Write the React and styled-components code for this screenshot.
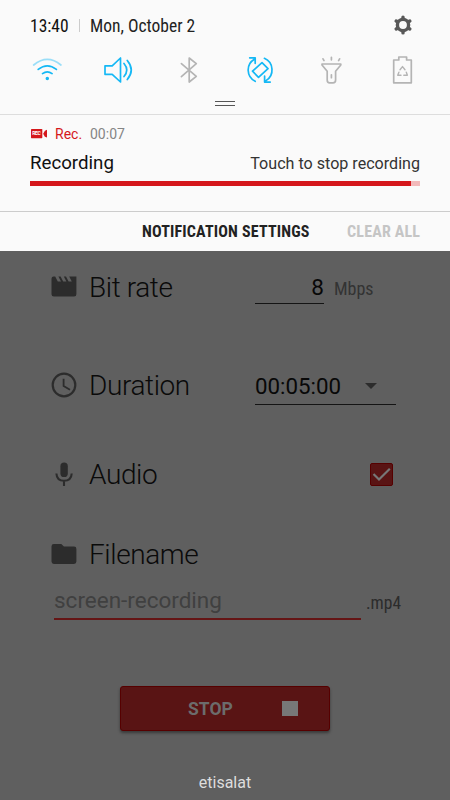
import React from 'react';
import styled, { createGlobalStyle } from 'styled-components';

const CYAN = '#15b8f5';
const GRAY = '#b4b4b4';
const RED = '#d5171b';

function App() {
  return (
    <Screen>
      <GlobalStyle />
      <Shade>
        <StatusHeader>
          <Clock>13:40</Clock>
          <HeaderRule />
          <DateText>Mon, October 2</DateText>
          <GearIcon />
        </StatusHeader>
        <QuickSettings>
          <WifiIcon />
          <SoundIcon />
          <BluetoothIcon />
          <RotateIcon />
          <TorchIcon />
          <BatteryIcon />
        </QuickSettings>
        <Handle />
        <Notification>
          <AppLine>
            <RecIcon />
            <AppName>Rec.</AppName>
            <Elapsed>00:07</Elapsed>
          </AppLine>
          <MessageLine>
            <Title>Recording</Title>
            <Hint>Touch to stop recording</Hint>
          </MessageLine>
          <Progress>
            <ProgressFill />
          </Progress>
        </Notification>
        <ShadeFooter>
          <FooterButton $width={168}>NOTIFICATION SETTINGS</FooterButton>
          <FooterButton $width={73} $disabled>
            CLEAR ALL
          </FooterButton>
        </ShadeFooter>
      </Shade>
      <Form>
        <Row $height={73}>
          <MovieIcon />
          <Label>Bit rate</Label>
          <BitRate>8</BitRate>
          <Unit>Mbps</Unit>
        </Row>
        <Row $height={124}>
          <ClockIcon />
          <Label $raised>Duration</Label>
          <Duration>
            00:05:00
            <Caret />
          </Duration>
        </Row>
        <Row $height={54}>
          <MicIcon />
          <Label $raised>Audio</Label>
          <Checkbox />
        </Row>
        <Row $height={106}>
          <FolderIcon />
          <Label $raised>Filename</Label>
        </Row>
        <FileRow>
          <FileInput>screen-recording</FileInput>
          <Extension>.mp4</Extension>
        </FileRow>
        <StopButton>
          <StopText>STOP</StopText>
          <StopSquare />
        </StopButton>
        <Carrier>etisalat</Carrier>
      </Form>
    </Screen>
  );
}

export default App;

function GearIcon() {
  return (
    <Gear viewBox="0 0 20 20">
      <g stroke="#585858" strokeLinecap="round">
        {[0, 60, 120].map((angle) => (
          <path
            key={angle}
            d="M10 2.1V17.9"
            strokeWidth="3.4"
            transform={`rotate(${angle} 10 10)`}
          />
        ))}
      </g>
      <circle cx="10" cy="10" r="5.6" fill="#fafafa" stroke="#585858" strokeWidth="3.4" />
    </Gear>
  );
}

function WifiIcon() {
  return (
    <QuickIcon viewBox="0 0 32 32" $color={CYAN}>
      <path d="M1.7 11Q15.3-.2 28.9 11" opacity=".42" />
      <path d="M6.2 15.4Q15.3 8.2 24.4 15.4" />
      <path d="M10.5 19.6Q15.3 16.2 20.1 19.6" />
      <circle cx="15.3" cy="24.4" r=".9" />
    </QuickIcon>
  );
}

function SoundIcon() {
  return (
    <QuickIcon viewBox="0 0 32 32" $color={CYAN}>
      <path d="M2 11.8H9.2L17.5 4V28L9.2 20.3H2Z" />
      <path d="M21 9.5Q26.5 16 21 22.5M24.3 6.5Q32.2 16 24.3 25.5" />
    </QuickIcon>
  );
}

function BluetoothIcon() {
  return (
    <QuickIcon viewBox="0 0 32 32" $color={GRAY}>
      <path d="M7.4 9.6L22.3 22.3L15.2 28V4L22.3 9.7L7.4 22.7" />
    </QuickIcon>
  );
}

function RotateIcon() {
  return (
    <QuickIcon viewBox="0 0 32 32" $color={CYAN}>
      <path d="M17 8.6L23 14.7L13.5 23.3L7.5 17.2Z" />
      <path d="M10.2 27.3A12.6 12.6 0 0 1 9.3 5.2M4.7 3.8H10.2V9.3" />
      <path d="M19.4 4.3A12.6 12.6 0 0 1 21 26.6M19.6 22.2V28.1H25.2" />
    </QuickIcon>
  );
}

function TorchIcon() {
  return (
    <QuickIcon viewBox="0 0 32 32" $color={GRAY}>
      <path d="M6 10H24.8V11L19.6 17.3V26Q19.6 28.9 17 28.9H13.6Q11.2 28.9 11.2 26V17.3L6 11Z" />
      <path d="M15.4 20.8V23.7M15.4 3.3V5.8M7 4.8L8 6.6M23.6 4.8L22.6 6.6" />
    </QuickIcon>
  );
}

function BatteryIcon() {
  return (
    <QuickIcon viewBox="0 0 32 32" $color={GRAY}>
      <path d="M6.7 6H11.8V3H19.6V6H24.3V28.8H6.7Z" />
      <path
        d="M13 15.8L15.5 12.6L18 15.8M19.3 18.2L20.4 21.2H16.8M14 21.2H10.7L11.9 18.2"
        strokeWidth="1.4"
      />
    </QuickIcon>
  );
}

function RecIcon() {
  return (
    <RecSvg viewBox="0 0 17 10">
      <rect width="11.3" height="9.2" rx=".6" fill={RED} />
      <path d="M12.2 4.7L13.9 1.7L16 .8V8.6L13.9 7.7Z" fill={RED} />
      <text x="1.2" y="6.4" fontSize="5" fontWeight="700" textLength="8.6" fill="#fff">
        REC
      </text>
    </RecSvg>
  );
}

function MovieIcon() {
  return (
    <RowIcon viewBox="0 0 26 26">
      <path d="M2.6 2.5H4.2L6.8 7.5H10L7.4 2.5H9.6L12.2 7.5H15.4L12.8 2.5H15L17.6 7.5H20.8L18.2 2.5H25.4V20.2Q25.4 22.6 23 22.6H2.9Q.5 22.6 .5 20.2V4.8Q.5 2.5 2.6 2.5Z" />
    </RowIcon>
  );
}

function ClockIcon() {
  return (
    <RowIcon viewBox="0 0 26 26">
      <circle cx="13" cy="13" r="11.3" fill="none" stroke="#2c2c2c" strokeWidth="2.2" />
      <path d="M12.6 6.7V14L19 17.7" fill="none" stroke="#2c2c2c" strokeWidth="1.8" />
    </RowIcon>
  );
}

function MicIcon() {
  return (
    <RowIcon viewBox="0 0 26 26">
      <rect x="9.4" y="1.5" width="7.4" height="14.6" rx="3.7" />
      <path
        d="M5.4 12.5Q5.8 19.8 13 19.8Q20.3 19.8 20.7 12.5M13 20V25"
        fill="none"
        stroke="#2c2c2c"
        strokeWidth="2.1"
      />
    </RowIcon>
  );
}

function FolderIcon() {
  return (
    <RowIcon viewBox="0 0 26 26">
      <path d="M2.9 3H10.3L12.9 5.6H23Q25.4 5.6 25.4 8V20.6Q25.4 23 23 23H2.9Q.5 23 .5 20.6V5.4Q.5 3 2.9 3Z" />
    </RowIcon>
  );
}

function Checkbox() {
  return (
    <CheckboxSvg viewBox="0 0 23 23">
      <rect x=".5" y=".5" width="22" height="22" rx="1.5" fill="#591414" stroke="#560000" />
      <path d="M3.5 11L9 16.5L19.8 5.8" fill="none" stroke="#777" strokeWidth="2.2" />
    </CheckboxSvg>
  );
}

const GlobalStyle = createGlobalStyle`
  * {
    box-sizing: border-box;
  }

  body {
    margin: 0;
    font-family: Roboto, 'Liberation Sans', sans-serif;
  }
`;

const Screen = styled.main`
  width: 450px;
  height: 800px;
  overflow: hidden;
  background-color: #5f5f5f;
  white-space: nowrap;
`;

const Shade = styled.section`
  height: 251px;
  background-color: #fafafa;
`;

const StatusHeader = styled.header`
  display: flex;
  align-items: center;
  height: 54px;
  padding: 0 37px 3px 30px;
  font-size: 17.5px;
  color: #111;
`;

const Condensed = styled.span`
  font-family: 'Roboto Condensed', Roboto, sans-serif;
  font-stretch: 75%;
`;

const Clock = styled(Condensed)`
  width: 49px;
`;

const HeaderRule = styled.i`
  width: 1px;
  height: 13px;
  margin-right: 10px;
  background-color: #ccc;
`;

const DateText = styled(Condensed)`
  flex: 1;
  color: #222;
`;

const Gear = styled.svg`
  width: 20px;
  height: 20px;
  margin-top: -1px;
`;

const QuickSettings = styled.div`
  display: flex;
  gap: 39px;
  height: 32px;
  padding-left: 32px;
`;

const QuickIcon = styled.svg`
  flex: none;
  width: 32px;
  height: 32px;
  fill: none;
  stroke: ${({ $color }) => $color};
  stroke-width: 1.7;
  stroke-linecap: round;
  stroke-linejoin: round;
`;

const Handle = styled.div`
  width: 20px;
  height: 5px;
  margin: 15px auto 8px;
  border: solid #555;
  border-width: 1px 0;
`;

const Notification = styled.article`
  height: 97px;
  padding: 10px 30px 0;
  border-top: 1px solid #ddd;
`;

const AppLine = styled.div`
  display: flex;
  align-items: center;
  height: 18px;
  font-size: 14px;
`;

const RecSvg = styled.svg`
  width: 17px;
  height: 10px;
  margin: 0 7px 0 1px;
`;

const AppName = styled.span`
  width: 35px;
  color: ${RED};
`;

const Elapsed = styled.span`
  color: #858585;
`;

const MessageLine = styled.div`
  display: flex;
  align-items: baseline;
  justify-content: space-between;
  height: 38px;
  padding-top: 9px;
`;

const Title = styled.strong`
  font-size: 18.7px;
  font-weight: 400;
  color: #111;
`;

const Hint = styled.span`
  font-size: 16.1px;
  color: #333;
`;

const Progress = styled.div`
  height: 5px;
  background-color: #f2b9ba;
`;

const ProgressFill = styled.div`
  width: 381px;
  height: 5px;
  background-color: ${RED};
`;

const ShadeFooter = styled.footer`
  display: flex;
  justify-content: flex-end;
  align-items: center;
  gap: 37px;
  height: 40px;
  padding-right: 30px;
  border-top: 1px solid #ccc;
`;

const FooterButton = styled(Condensed)`
  width: ${({ $width }) => $width}px;
  font-size: 16px;
  font-weight: 700;
  letter-spacing: 0.18px;
  color: ${({ $disabled }) => ($disabled ? '#c5c5c5' : '#222')};
`;

const Form = styled.section`
  padding: 0 0 0 50px;
`;

const Row = styled.div`
  display: flex;
  align-items: center;
  height: ${({ $height }) => $height}px;
`;

const RowIcon = styled.svg`
  flex: none;
  width: 26px;
  height: 26px;
  margin: -2px 12px 0 1px;
  fill: #2c2c2c;
`;

const Label = styled.span`
  width: 166px;
  margin-top: ${({ $raised }) => ($raised ? '-2px' : 0)};
  font-size: 28px;
  font-weight: 300;
  letter-spacing: -0.4px;
  color: #0a0a0a;
`;

const BitRate = styled.span`
  width: 69px;
  height: 33px;
  border-bottom: 1px solid #141414;
  font-size: 22.5px;
  line-height: 32px;
  text-align: right;
  color: #080808;
`;

const Unit = styled(Condensed)`
  margin: 2px 0 0 10px;
  font-size: 18px;
  color: #333;
`;

const Duration = styled.span`
  display: flex;
  justify-content: space-between;
  align-items: center;
  width: 141px;
  height: 38px;
  padding-right: 19px;
  border-bottom: 1px solid #141414;
  font-size: 22.3px;
  color: #080808;
`;

const Caret = styled.i`
  border: solid transparent;
  border-width: 6px 6px 0;
  border-top-color: #2c2c2c;
`;

const CheckboxSvg = styled.svg`
  width: 23px;
  height: 23px;
  margin: -1px 0 0 115px;
`;

const FileRow = styled.div`
  display: flex;
  height: 32px;
  margin: -20px 0 0 4px;
`;

const FileInput = styled.span`
  width: 307px;
  border-bottom: 2px solid #651515;
  font-size: 22.5px;
  line-height: 25px;
  color: #404040;
`;

const Extension = styled(Condensed)`
  margin-left: 5px;
  font-size: 17.5px;
  line-height: 30px;
  color: #2c2c2c;
`;

const StopButton = styled.button`
  display: flex;
  align-items: center;
  width: 210px;
  height: 45px;
  margin: 66px 0 0 70px;
  padding: 0 0 0 67px;
  border: 1px solid #560000;
  border-radius: 3px;
  background-color: #591414;
  box-shadow: 0 2px 3px rgba(0, 0, 0, 0.4);
  font-family: inherit;
`;

const StopText = styled.span`
  width: 94px;
  font-size: 17.5px;
  font-weight: 700;
  text-align: left;
  color: #6c6c6c;
`;

const StopSquare = styled.i`
  width: 16px;
  height: 15px;
  background-color: #777;
`;

const Carrier = styled.p`
  width: 450px;
  margin: 42px 0 0 -50px;
  font-size: 16px;
  line-height: 20px;
  text-align: center;
  color: #ddd;
`;
